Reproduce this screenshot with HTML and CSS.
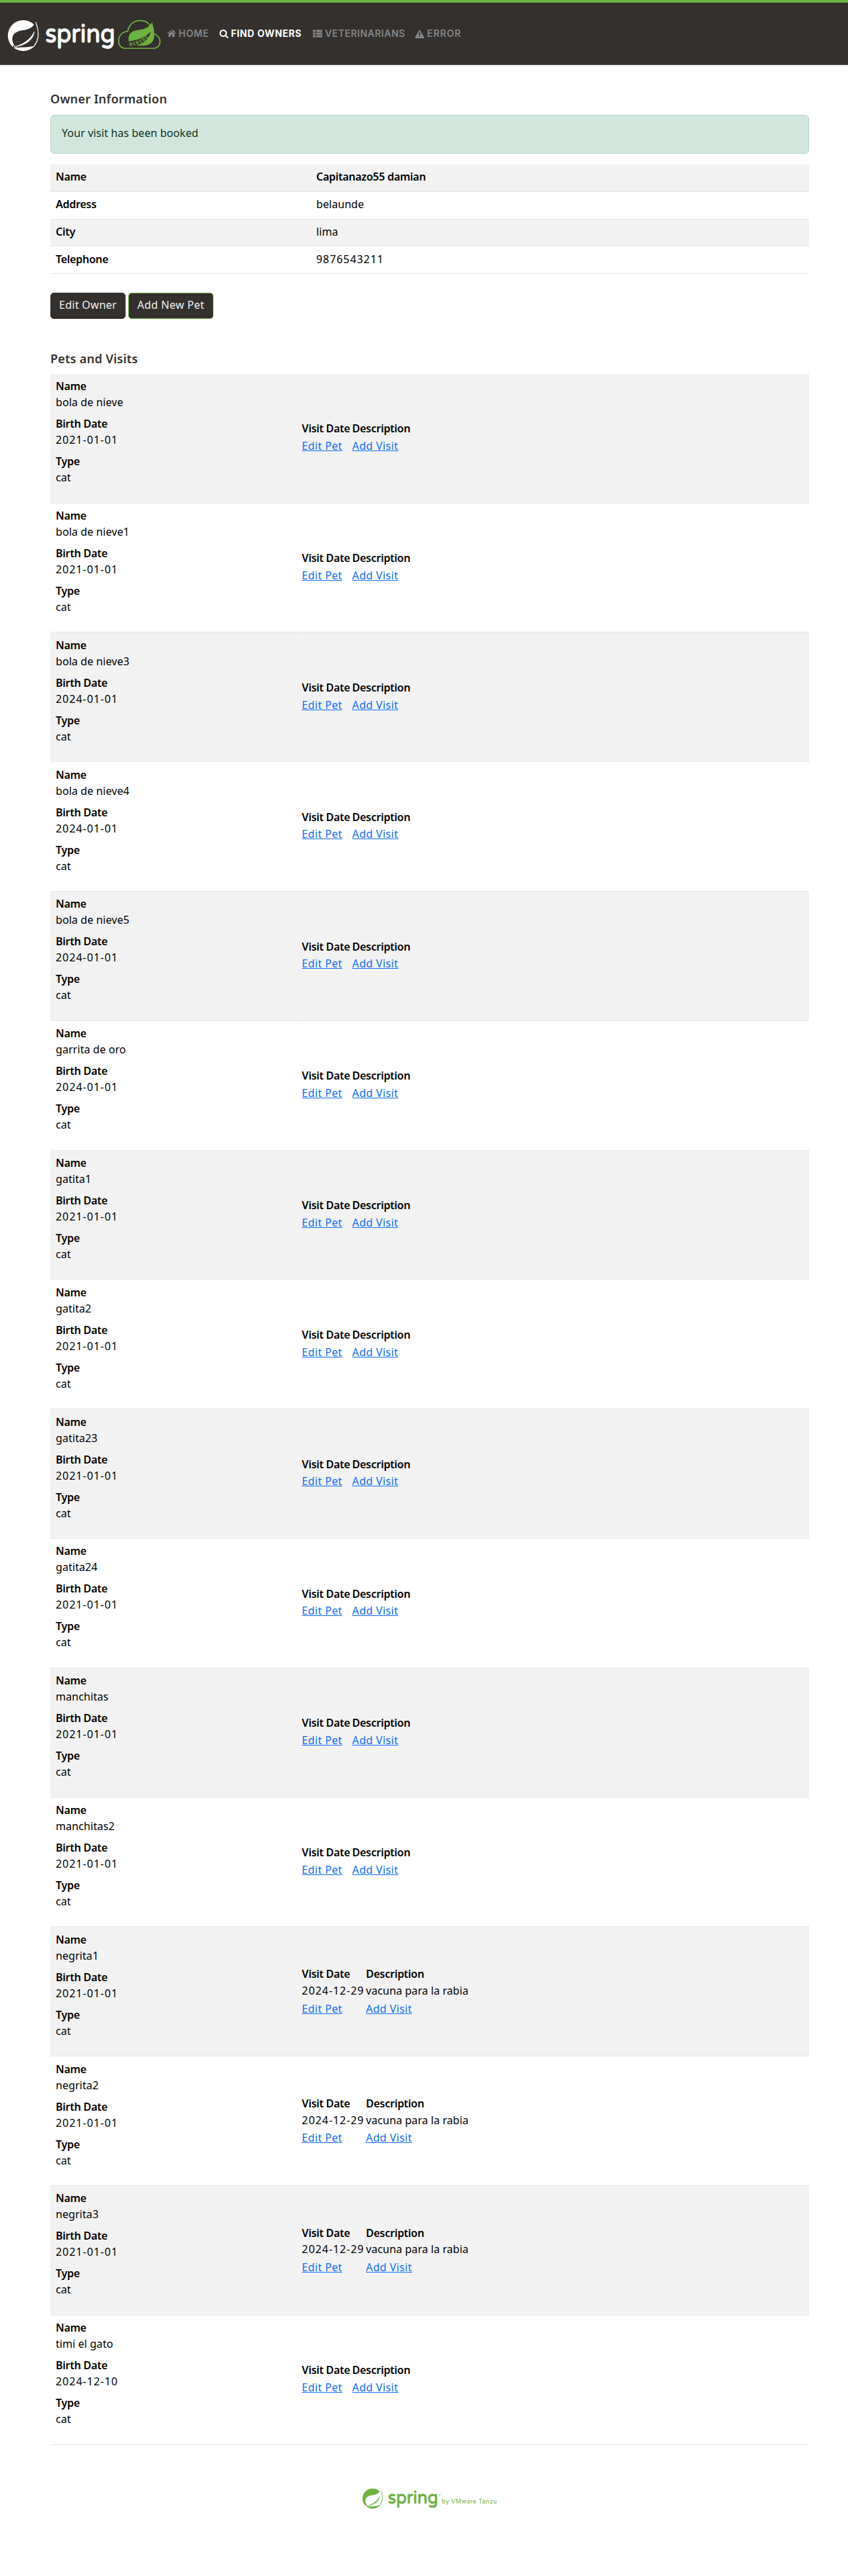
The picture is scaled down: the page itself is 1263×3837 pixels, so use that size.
FILE: index.html
```html
<!DOCTYPE html>
<html lang="en">
<head>
<meta charset="utf-8">
<title>PetClinic :: a Spring Framework demonstration</title>
<link rel="stylesheet" href="styles.css">
</head>
<body>
<svg class="defs" width="0" height="0" aria-hidden="true">
  <symbol id="leaf" viewBox="34 28 142 142">
    <circle cx="104" cy="99" r="69" fill="currentColor"/>
    <path class="cut" d="M160 38C148 62 130 71 104 75C72 79 54 92 55 116C56 128 59 136 64 141L76 153C104 150 132 153 154 144C172 128 184 90 160 38Z"/>
    <path d="M160 39C175 80 176 116 153 144" fill="none" stroke="currentColor" stroke-width="3.5"/>
    <path d="M153 82C150 115 118 143 66 149C104 138 138 116 153 82Z" fill="currentColor" stroke="currentColor" stroke-width="2"/>
    <circle class="cut" cx="64" cy="148" r="6"/><circle cx="65" cy="148" r="3" fill="currentColor"/>
  </symbol>
</svg>
<header class="navbar">
  <svg class="brand" width="240" height="60" viewBox="0 0 240 60">
    <use href="#leaf" x="11.3" y="9.3" width="47.3" height="47.3"/>
    <text class="wordmark" x="67.5" y="43" textLength="104" lengthAdjust="spacingAndGlyphs">spring</text>
    <g transform="translate(165 0) scale(.33333)">
      <path d="M66 156C46 156 35 142 35 124C35 98 52 82 76 80C80 50 104 32 131 32C158 32 176 48 184 70C190 92 194 92 198 93C214 101 220 114 220 127C220 144 208 156 190 156Z" fill="none" stroke="#6db33f" stroke-width="5"/>
      <path d="M184 39C172 66 144 72 116 75C88 79 76 98 80 122L84 144H140C180 144 197 122 194 92C194 70 188 54 184 39Z" fill="#6db33f"/>
      <path class="band" d="M78 125C116 121 150 110 179 82C171 114 148 134 116 143L112 152H78Z"/>
      <path id="bits" d="M83 147C116 144 150 130 180 95" fill="none"/>
      <text class="bits"><textPath href="#bits">010101</textPath></text>
    </g>
  </svg>
  <nav class="nav">
    <a class="home"><svg width="13" height="14" viewBox="0 0 13 14"><path d="M6.5 3.9 11 7.6V11.5Q11 12 10.5 12H7.7V8.8H5.3V12H2.5Q2 12 2 11.5V7.6ZM6.5 1.3 9.3 3.6V2H11V5L12.9 6.6 12.2 7.4 6.5 2.7.8 7.4.1 6.6Z"/></svg><span>HOME</span></a>
    <a class="find active"><svg width="13" height="13" viewBox="0 0 1664 1664"><path d="M1152 704q0-185-131.5-316.5t-316.5-131.5-316.5 131.5-131.5 316.5 131.5 316.5 316.5 131.5 316.5-131.5 131.5-316.5zm512 832q0 52-38 90t-90 38q-54 0-90-38l-343-342q-179 124-399 124-143 0-273.5-55.5t-225-150-150-225-55.5-273.5 55.5-273.5 150-225 225-150 273.5-55.5 273.5 55.5 225 150 150 225 55.5 273.5q0 220-124 399l343 343q37 37 37 90z"/></svg><span>FIND OWNERS</span></a>
    <a class="vets"><svg width="14" height="12" viewBox="0 0 14 12"><path d="M0 .5h4v3H0zM5 .5h9v3H5zM0 4.5h4v3H0zM5 4.5h9v3H5zM0 8.5h4v3H0zM5 8.5h9v3H5z"/></svg><span>VETERINARIANS</span></a>
    <a class="error"><svg width="14" height="13" viewBox="0 0 14 13"><path fill-rule="evenodd" d="M7 0 14 12Q14 13 13 13H1Q0 13 0 12ZM5.9 4.2 6.2 8.3H7.8L8.1 4.2ZM6.1 9.2V11H7.9V9.2Z"/></svg><span>ERROR</span></a>
  </nav>
</header>
<main class="content">
  <h2>Owner Information</h2>
  <div class="alert">Your visit has been booked</div>
  <div class="owner">
    <div class="row"><b>Name</b><div><b>Capitanazo55 damian</b></div></div>
    <div class="row"><b>Address</b><div>belaunde</div></div>
    <div class="row"><b>City</b><div>lima</div></div>
    <div class="row"><b>Telephone</b><div class="num">9876543211</div></div>
  </div>
  <div class="actions"><a class="btn">Edit Owner</a><a class="btn focus">Add New Pet</a></div>
  <h2 class="pets-title">Pets and Visits</h2>
  <div class="pets">
    <section class="pet"><dl><dt>Name</dt><dd>bola de nieve</dd><dt>Birth Date</dt><dd class="num">2021-01-01</dd><dt>Type</dt><dd>cat</dd></dl><div class="visits"><b>Visit Date</b><b>Description</b><a href="#">Edit Pet</a><a href="#">Add Visit</a></div></section>
    <section class="pet"><dl><dt>Name</dt><dd>bola de nieve1</dd><dt>Birth Date</dt><dd class="num">2021-01-01</dd><dt>Type</dt><dd>cat</dd></dl><div class="visits"><b>Visit Date</b><b>Description</b><a href="#">Edit Pet</a><a href="#">Add Visit</a></div></section>
    <section class="pet"><dl><dt>Name</dt><dd>bola de nieve3</dd><dt>Birth Date</dt><dd class="num">2024-01-01</dd><dt>Type</dt><dd>cat</dd></dl><div class="visits"><b>Visit Date</b><b>Description</b><a href="#">Edit Pet</a><a href="#">Add Visit</a></div></section>
    <section class="pet"><dl><dt>Name</dt><dd>bola de nieve4</dd><dt>Birth Date</dt><dd class="num">2024-01-01</dd><dt>Type</dt><dd>cat</dd></dl><div class="visits"><b>Visit Date</b><b>Description</b><a href="#">Edit Pet</a><a href="#">Add Visit</a></div></section>
    <section class="pet"><dl><dt>Name</dt><dd>bola de nieve5</dd><dt>Birth Date</dt><dd class="num">2024-01-01</dd><dt>Type</dt><dd>cat</dd></dl><div class="visits"><b>Visit Date</b><b>Description</b><a href="#">Edit Pet</a><a href="#">Add Visit</a></div></section>
    <section class="pet"><dl><dt>Name</dt><dd>garrita de oro</dd><dt>Birth Date</dt><dd class="num">2024-01-01</dd><dt>Type</dt><dd>cat</dd></dl><div class="visits"><b>Visit Date</b><b>Description</b><a href="#">Edit Pet</a><a href="#">Add Visit</a></div></section>
    <section class="pet"><dl><dt>Name</dt><dd>gatita1</dd><dt>Birth Date</dt><dd class="num">2021-01-01</dd><dt>Type</dt><dd>cat</dd></dl><div class="visits"><b>Visit Date</b><b>Description</b><a href="#">Edit Pet</a><a href="#">Add Visit</a></div></section>
    <section class="pet"><dl><dt>Name</dt><dd>gatita2</dd><dt>Birth Date</dt><dd class="num">2021-01-01</dd><dt>Type</dt><dd>cat</dd></dl><div class="visits"><b>Visit Date</b><b>Description</b><a href="#">Edit Pet</a><a href="#">Add Visit</a></div></section>
    <section class="pet"><dl><dt>Name</dt><dd>gatita23</dd><dt>Birth Date</dt><dd class="num">2021-01-01</dd><dt>Type</dt><dd>cat</dd></dl><div class="visits"><b>Visit Date</b><b>Description</b><a href="#">Edit Pet</a><a href="#">Add Visit</a></div></section>
    <section class="pet"><dl><dt>Name</dt><dd>gatita24</dd><dt>Birth Date</dt><dd class="num">2021-01-01</dd><dt>Type</dt><dd>cat</dd></dl><div class="visits"><b>Visit Date</b><b>Description</b><a href="#">Edit Pet</a><a href="#">Add Visit</a></div></section>
    <section class="pet"><dl><dt>Name</dt><dd>manchitas</dd><dt>Birth Date</dt><dd class="num">2021-01-01</dd><dt>Type</dt><dd>cat</dd></dl><div class="visits"><b>Visit Date</b><b>Description</b><a href="#">Edit Pet</a><a href="#">Add Visit</a></div></section>
    <section class="pet"><dl><dt>Name</dt><dd>manchitas2</dd><dt>Birth Date</dt><dd class="num">2021-01-01</dd><dt>Type</dt><dd>cat</dd></dl><div class="visits"><b>Visit Date</b><b>Description</b><a href="#">Edit Pet</a><a href="#">Add Visit</a></div></section>
    <section class="pet"><dl><dt>Name</dt><dd>negrita1</dd><dt>Birth Date</dt><dd class="num">2021-01-01</dd><dt>Type</dt><dd>cat</dd></dl><div class="visits booked"><b>Visit Date</b><b>Description</b><span class="num">2024-12-29</span><span>vacuna para la rabia</span><a href="#">Edit Pet</a><a href="#">Add Visit</a></div></section>
    <section class="pet"><dl><dt>Name</dt><dd>negrita2</dd><dt>Birth Date</dt><dd class="num">2021-01-01</dd><dt>Type</dt><dd>cat</dd></dl><div class="visits booked"><b>Visit Date</b><b>Description</b><span class="num">2024-12-29</span><span>vacuna para la rabia</span><a href="#">Edit Pet</a><a href="#">Add Visit</a></div></section>
    <section class="pet"><dl><dt>Name</dt><dd>negrita3</dd><dt>Birth Date</dt><dd class="num">2021-01-01</dd><dt>Type</dt><dd>cat</dd></dl><div class="visits booked"><b>Visit Date</b><b>Description</b><span class="num">2024-12-29</span><span>vacuna para la rabia</span><a href="#">Edit Pet</a><a href="#">Add Visit</a></div></section>
    <section class="pet"><dl><dt>Name</dt><dd>timi el gato</dd><dt>Birth Date</dt><dd class="num">2024-12-10</dd><dt>Type</dt><dd>cat</dd></dl><div class="visits"><b>Visit Date</b><b>Description</b><a href="#">Edit Pet</a><a href="#">Add Visit</a></div></section>
  </div>
  <footer>
    <svg class="tanzu" width="201" height="48" viewBox="0 -8 201 48">
      <use href="#leaf" x="-.4" y=".2" width="31" height="31"/>
      <text class="wordmark small" x="38" y="22.5" textLength="74.5" lengthAdjust="spacingAndGlyphs">spring</text>
      <text class="reg" x="113.5" y="12">®</text>
      <text class="by" x="118" y="22.5" textLength="82">by VMware Tanzu</text>
    </svg>
  </footer>
</main>
</body>
</html>
```
FILE: styles.css
```css
* { box-sizing: border-box; }
body { margin: 0; background: #fff; color: #000; font: 16px/24px "Noto Sans", "Open Sans", sans-serif; letter-spacing: .06px; }
b, dt { font-weight: 600; letter-spacing: -.28px; }
.defs { display: block; }
.num { letter-spacing: .93px; }

.navbar { display: flex; height: 97px; padding-top: 16px; background: #34302d; border-top: 4px solid #6db33f; border-bottom: 1px solid #5c5855; color: #fff; --cut: #34302d; }
.brand { display: block; flex: none; }
.cut, .band { fill: var(--cut); }
.wordmark { font: 500 38.5px "Varela Round", Inter, sans-serif; letter-spacing: 0; fill: currentColor; stroke: currentColor; stroke-width: 1.4px; stroke-linejoin: round; }
.bits { font: 700 24px "Liberation Mono", monospace; fill: #6db33f; letter-spacing: 2px; }
.nav { display: flex; align-items: center; height: 60px; margin-left: 9px; }
.nav a { display: flex; align-items: center; color: #838789; font: 600 14px/20px Inter, sans-serif; white-space: nowrap; }
.nav a.active { color: #fff; font-weight: 700; }
.nav svg { fill: currentColor; margin-right: 4px; }
.nav .home { width: 78px; letter-spacing: .7px; }
.nav .find { width: 139px; letter-spacing: .6px; }
.nav .vets { width: 152px; letter-spacing: .5px; }
.nav .error { letter-spacing: .9px; }

.content { width: 1130px; margin: 38px 0 0 75px; }
h2 { margin: 0 0 12px; color: #34302d; font-size: 18px; line-height: 24px; font-weight: 600; letter-spacing: .22px; }
.alert { height: 58px; padding: 14px 16px; margin-bottom: 16px; border: 1px solid #b3d7c7; border-radius: 6px; background: #d1e7dd; color: #0a3622; }
.row { display: grid; grid-template-columns: 388px 1fr; height: 40.8px; border-bottom: 1px solid #e6e6e6; }
.row > * { padding: 6.4px 8px 0; }
.row:nth-child(odd), .pet:nth-child(odd) { background: #f2f2f2; }
.row > div, .visits { border-left: 1px solid rgba(255, 255, 255, .2); }
.row > div { padding-left: 7px; }
.actions { display: flex; gap: 4px; margin: 28px 0 47px; }
.btn { width: 112px; height: 39px; padding: 4.4px 0 0; text-align: center; border: 1px solid #34302d; border-radius: 5px; background: #34302d; color: #f1f1f1; letter-spacing: .25px; }
.btn.focus { width: 127px; border: 1.5px solid #6db33f; letter-spacing: .35px; }
.pets-title { margin-bottom: 10.7px; }
.pet { display: grid; grid-template-columns: 366px 1fr; height: 192.8px; border-bottom: 1px solid #e8e8e8; }
dl { margin: 0; padding: 6.4px 8px 0; }
dd { margin: 0 0 8px; }
.visits { display: grid; grid-template-columns: 75px 1fr; grid-template-rows: 25.6px 24px; padding: 69.5px 8px 0 7.6px; }
.visits a { justify-self: start; color: #0d6efd; text-decoration: underline; letter-spacing: .35px; }
.visits.booked { grid-template-columns: 95.5px 1fr; grid-template-rows: 24.6px 26.8px 24px; padding-top: 57.8px; }
footer { display: flex; justify-content: center; padding-top: 56px; height: 195px; color: #6db33f; --cut: #fff; }
.wordmark.small { font-size: 27.5px; stroke-width: 1px; }
.reg { font: 4px Inter, sans-serif; fill: currentColor; }
.by { font: 9px Inter, sans-serif; fill: currentColor; }
```
